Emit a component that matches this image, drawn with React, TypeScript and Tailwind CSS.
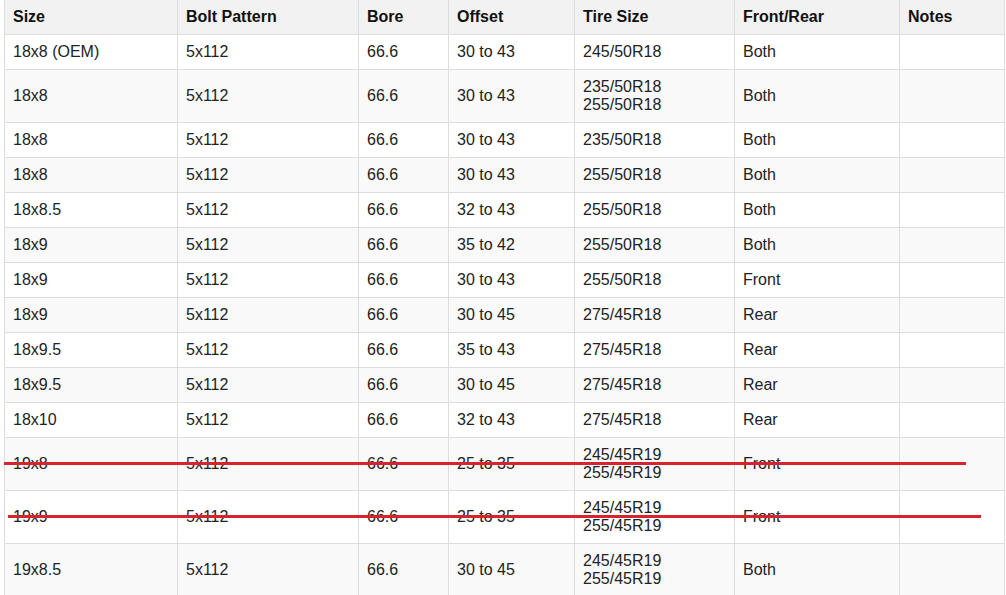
const rows: { size: string; tire: string[]; offset: string; fr: string }[] = [
  { size: "18x8 (OEM)", offset: "30 to 43", tire: ["245/50R18"], fr: "Both" },
  { size: "18x8", offset: "30 to 43", tire: ["235/50R18", "255/50R18"], fr: "Both" },
  { size: "18x8", offset: "30 to 43", tire: ["235/50R18"], fr: "Both" },
  { size: "18x8", offset: "30 to 43", tire: ["255/50R18"], fr: "Both" },
  { size: "18x8.5", offset: "32 to 43", tire: ["255/50R18"], fr: "Both" },
  { size: "18x9", offset: "35 to 42", tire: ["255/50R18"], fr: "Both" },
  { size: "18x9", offset: "30 to 43", tire: ["255/50R18"], fr: "Front" },
  { size: "18x9", offset: "30 to 45", tire: ["275/45R18"], fr: "Rear" },
  { size: "18x9.5", offset: "35 to 43", tire: ["275/45R18"], fr: "Rear" },
  { size: "18x9.5", offset: "30 to 45", tire: ["275/45R18"], fr: "Rear" },
  { size: "18x10", offset: "32 to 43", tire: ["275/45R18"], fr: "Rear" },
  { size: "19x8", offset: "25 to 35", tire: ["245/45R19", "255/45R19"], fr: "Front" },
  { size: "19x9", offset: "25 to 35", tire: ["245/45R19", "255/45R19"], fr: "Front" },
  { size: "19x8.5", offset: "30 to 45", tire: ["245/45R19", "255/45R19"], fr: "Both" },
];

const headers = ["Size", "Bolt Pattern", "Bore", "Offset", "Tire Size", "Front/Rear", "Notes"];
const widths = ["w-[173px]", "w-[181px]", "w-[90px]", "w-[126px]", "w-[160px]", "w-[165px]", "w-[105px]"];

export default function App() {
  return (
    <div className="h-[595px] w-[1006px] overflow-hidden bg-white font-['Liberation_Sans',Arial,sans-serif] text-[16px] leading-[18px]">
      <div className="relative -mt-px pl-[4px]">
        <table className="w-[1000px] table-fixed border-collapse">
          <thead>
            <tr className="bg-[#f2f2f2]">
              {headers.map((h, i) => (
                <th
                  key={h}
                  className={`${widths[i]} border border-[#dddddd] px-2 py-2 text-left font-bold text-[#111111]`}
                >
                  {h}
                </th>
              ))}
            </tr>
          </thead>
          <tbody className="text-[#222222]">
            {rows.map((r, i) => (
              <tr key={i} className={i % 2 === 1 ? "bg-[#f9f9f9]" : "bg-white"}>
                <td className="border border-[#dddddd] px-2 py-2">{r.size}</td>
                <td className="border border-[#dddddd] px-2 py-2">5x112</td>
                <td className="border border-[#dddddd] px-2 py-2">66.6</td>
                <td className="border border-[#dddddd] px-2 py-2">{r.offset}</td>
                <td className="border border-[#dddddd] px-2 py-2">
                  {r.tire.map((t) => (
                    <div key={t}>{t}</div>
                  ))}
                </td>
                <td className="border border-[#dddddd] px-2 py-2">{r.fr}</td>
                <td className="border border-[#dddddd] px-2 py-2"></td>
              </tr>
            ))}
          </tbody>
        </table>
        {/* hand-drawn strike lines over the 19x8 / 19x9 rows */}
        <div className="absolute left-[4px] top-[463px] h-[3px] w-[962px] bg-[#d8232e]" />
        <div className="absolute left-[8px] top-[516px] h-[3px] w-[973px] bg-[#d8232e]" />
      </div>
    </div>
  );
}
